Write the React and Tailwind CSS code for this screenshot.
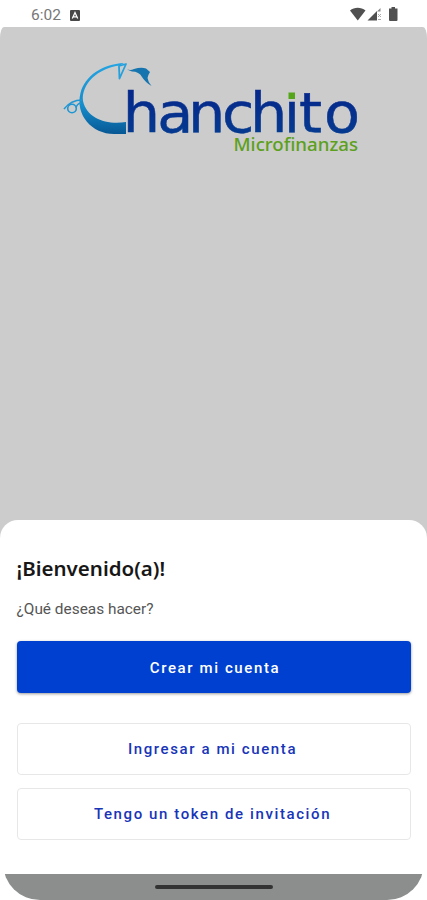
const StatusBar = () => (
  <header className="flex h-[27px] shrink-0 items-start justify-between bg-white pl-[31px] pr-[28px] pt-[7px]">
    <div className="flex items-center gap-[9px]">
      <span className="font-[Roboto,sans-serif] text-[15.5px] leading-4 text-[#777]">6:02</span>
      <svg className="h-[11px] w-[10px]" viewBox="0 0 10 11">
        <rect width="10" height="11" rx="1" fill="#484848" />
        <path d="M2.3 8.5 5 2.5 7.7 8.5M3.5 6.8h3" fill="none" stroke="#fff" strokeWidth="1.3" />
      </svg>
    </div>
    <svg className="h-[14px] w-[49px]" viewBox="0 0 49 14">
      <path d="M0 3.5C4.3-.2 11-.2 15.5 3.5L7.75 13.5Z" fill="#505050" />
      <path d="M17.5 13.5 27 4v9.5Z" fill="#505050" />
      <path d="M27 4.5 30.5 1v3.5Z" fill="#888" />
      <path d="m28 7 3 3m0-3-3 3M28 12.5h3" stroke="#aaa" strokeWidth="1" />
      <path d="M41.5 0h3.5v1.5h2.5V13a1 1 0 0 1-1 1h-6.5a1 1 0 0 1-1-1V1.5H41.5Z" fill="#505050" />
    </svg>
  </header>
);

const Logo = () => (
  <svg className="h-[105px] w-[320px]" viewBox="55 55 320 105">
    <defs>
      <linearGradient id="body" x1="0" y1="0" x2="0" y2="1">
        <stop offset="0" stopColor="#24a4e2" />
        <stop offset="0.6" stopColor="#168ccb" />
        <stop offset="1" stopColor="#075894" />
      </linearGradient>
      <linearGradient id="letters" x1="0" y1="0" x2="0" y2="1">
        <stop offset="0" stopColor="#06238a" />
        <stop offset="1" stopColor="#053f91" />
      </linearGradient>
    </defs>
    <path
      d="M124 63C102 64 85 76 80.5 93C75 115 92 134 114 134H126V122C107 125 87 119 83 101C81 84 98 68 120 65.5Z"
      fill="url(#body)"
    />
    <path d="M119 66 119.5 78.5 126 64Z" fill="none" stroke="#24a0dd" strokeWidth="1.8" strokeLinejoin="round" />
    <path d="M127 69.5Q131 70.5 134 69Q141 67 146 68.5L150 72Q148 75 147.5 78Q148 82 151.5 86Q145 82 142 77Q139 71.5 132 71.5Z" fill="#1675ae" />
    <g fill="none" stroke="#2097d3">
      <circle cx="72" cy="108.5" r="4.3" strokeWidth="1.6" />
      <path d="M64 109Q71 100 82 100" strokeWidth="1.5" />
      <path d="M76 108Q77 103.5 81 103" strokeWidth="1.3" />
    </g>
    <text
      transform="scale(1.08 1)"
      x="113.7 145.6 174 205.6 231.5 262.8 276.9 300"
      y="132.5"
      fontFamily="DejaVu Sans, sans-serif"
      fontSize="54.5"
      fill="url(#letters)"
      stroke="url(#letters)"
      strokeWidth="0.5"
    >
      hanchito
    </text>
    <rect x="286" y="88" width="11" height="12.5" fill="#ccc" />
    <rect x="288.5" y="92.5" width="6.5" height="6.5" fill="#55a51b" />
    <text
      x="233.5"
      y="151"
      textLength="124.5"
      lengthAdjust="spacingAndGlyphs"
      fontFamily="Noto Sans, sans-serif"
      fontSize="17.5"
      fontWeight="500"
      fill="#5ca01c"
    >
      Microfinanzas
    </text>
  </svg>
);

const outlined =
  'flex h-[52px] w-full items-center justify-center rounded-[4px] border border-[#e7e7e7] bg-white text-[15px] font-medium tracking-[1.6px] text-[#1835b8]';

const App = () => {
  return (
    <div className="flex h-[900px] w-full flex-col overflow-hidden bg-white font-[Roboto,sans-serif]">
      <StatusBar />
      <main className="flex min-h-0 flex-1 flex-col bg-[#ccc] [border-radius:4px_4px_0_0/11px_11px_0_0]">
        <div className="h-[493px] shrink-0 pl-[55px] pt-[28px]">
          <Logo />
        </div>

        <section className="flex min-h-0 flex-1 flex-col rounded-t-[18px] bg-white">
          <div className="mx-[3px] flex flex-1 flex-col overflow-hidden rounded-b-[37px]">
            <div className="flex-1 px-[13.5px] pt-[35px]">
              <h1 className="font-['Noto_Sans',sans-serif] text-[20.5px] font-semibold leading-[26px] text-[#171717]">¡Bienvenido(a)!</h1>
              <p className="mt-[18px] text-[15.4px] leading-5 text-[#555]">¿Qué deseas hacer?</p>
              <button className="mt-[22px] flex h-[52px] w-full items-center justify-center rounded-[4px] bg-[#0040d0] pl-[3px] pt-[2px] text-[15px] font-medium tracking-[1.6px] text-white shadow-[0_1px_3px_rgba(0,0,0,0.4)]">
                Crear mi cuenta
              </button>
              <button className={`${outlined} mt-[30px] pr-[2px]`}>Ingresar a mi cuenta</button>
              <button className={`${outlined} mt-[13px] pr-[2px]`}>Tengo un token de invitación</button>
            </div>
            <footer className="flex h-[26px] justify-center bg-[#8c8d8d] pt-[11px]">
              <div className="h-[4px] w-[118px] rounded-full bg-[#333]" />
            </footer>
          </div>
        </section>
      </main>
    </div>
  );
};

export default App;
